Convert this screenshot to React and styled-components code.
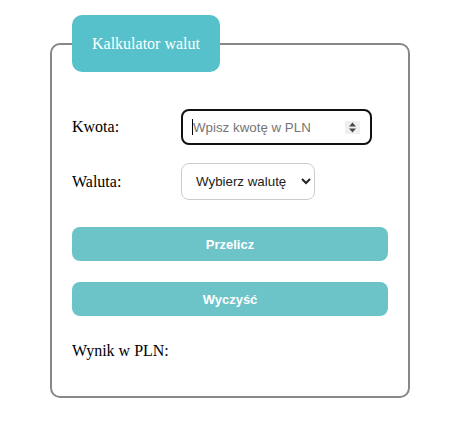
import React from "react";
import styled, { createGlobalStyle } from "styled-components";

const GlobalStyle = createGlobalStyle`
  body {
    margin: 0;
    background: #ffffff;
    font-family: "Liberation Serif", "Times New Roman", serif;
  }
`;

const Page = styled.div`
  padding: 15px 0 0 50px;
`;

const Fieldset = styled.fieldset`
  box-sizing: border-box;
  width: 360px;
  margin: 0;
  padding: 0 20px 36px;
  border: 2px solid #888888;
  border-radius: 10px;
  min-inline-size: 0;
`;

const Legend = styled.legend`
  padding: 20px;
  background: #56c1ca;
  color: #ffffff;
  font-size: 16px;
  line-height: 17px;
  border-radius: 10px;
`;

const Row = styled.div`
  display: flex;
  align-items: center;
  margin-top: ${(p) => p.$gap}px;
`;

const Label = styled.label`
  width: 109px;
  font-size: 16px;
  color: #000;
`;

const InputBox = styled.div`
  box-sizing: border-box;
  display: flex;
  align-items: center;
  width: 191px;
  height: 36px;
  padding: 0 10px 0 9px;
  border: 2px solid #111111;
  border-radius: 8px;
`;

const Caret = styled.span`
  width: 1px;
  height: 16px;
  background: #000;
`;

const TextInput = styled.input`
  flex: 1;
  min-width: 0;
  border: none;
  outline: none;
  padding: 0;
  font-family: "Liberation Sans", Arial, sans-serif;
  font-size: 13.333px;
  background: transparent;
  &::placeholder {
    color: #757575;
  }
`;

const Spinner = styled.span`
  display: flex;
  align-items: center;
  justify-content: center;
  width: 15px;
  height: 13px;
  background: #efefef;
`;

const Select = styled.select`
  box-sizing: border-box;
  width: 134px;
  height: 37px;
  padding: 0 8px 0 10px;
  border: 1px solid #cccccc;
  border-radius: 8px;
  background: #ffffff;
  color: #222;
  font-family: "Liberation Sans", Arial, sans-serif;
  font-size: 13.333px;
`;

const Button = styled.button`
  display: block;
  box-sizing: border-box;
  width: 100%;
  height: 34px;
  margin-top: ${(p) => p.$gap}px;
  border: none;
  border-radius: 8px;
  background: #6cc3c8;
  color: #ffffff;
  font-family: "Liberation Sans", Arial, sans-serif;
  font-weight: bold;
  font-size: 13px;
  cursor: pointer;
`;

const Result = styled.p`
  margin: 26px 0 0;
  font-size: 16px;
  line-height: 18px;
  color: #000;
`;

export default function App() {
  return (
    <>
      <GlobalStyle />
      <Page>
        <Fieldset>
          <Legend>Kalkulator walut</Legend>
          <Row $gap={37}>
            <Label htmlFor="kwota">Kwota:</Label>
            <InputBox>
              <Caret />
              <TextInput id="kwota" type="text" placeholder="Wpisz kwotę w PLN" />
              <Spinner>
                <svg width="9" height="11" viewBox="0 0 9 11">
                  <path d="M4.5 0.5 L8 4.5 H1 Z" fill="#4a4a4a" />
                  <path d="M4.5 10.5 L8 6.5 H1 Z" fill="#4a4a4a" />
                </svg>
              </Spinner>
            </InputBox>
          </Row>
          <Row $gap={18}>
            <Label htmlFor="waluta">Waluta:</Label>
            <Select id="waluta" defaultValue="">
              <option value="">Wybierz walutę</option>
              <option value="EUR">EUR</option>
              <option value="USD">USD</option>
              <option value="CHF">CHF</option>
            </Select>
          </Row>
          <Button $gap={27}>Przelicz</Button>
          <Button $gap={21}>Wyczyść</Button>
          <Result>Wynik w PLN:</Result>
        </Fieldset>
      </Page>
    </>
  );
}
